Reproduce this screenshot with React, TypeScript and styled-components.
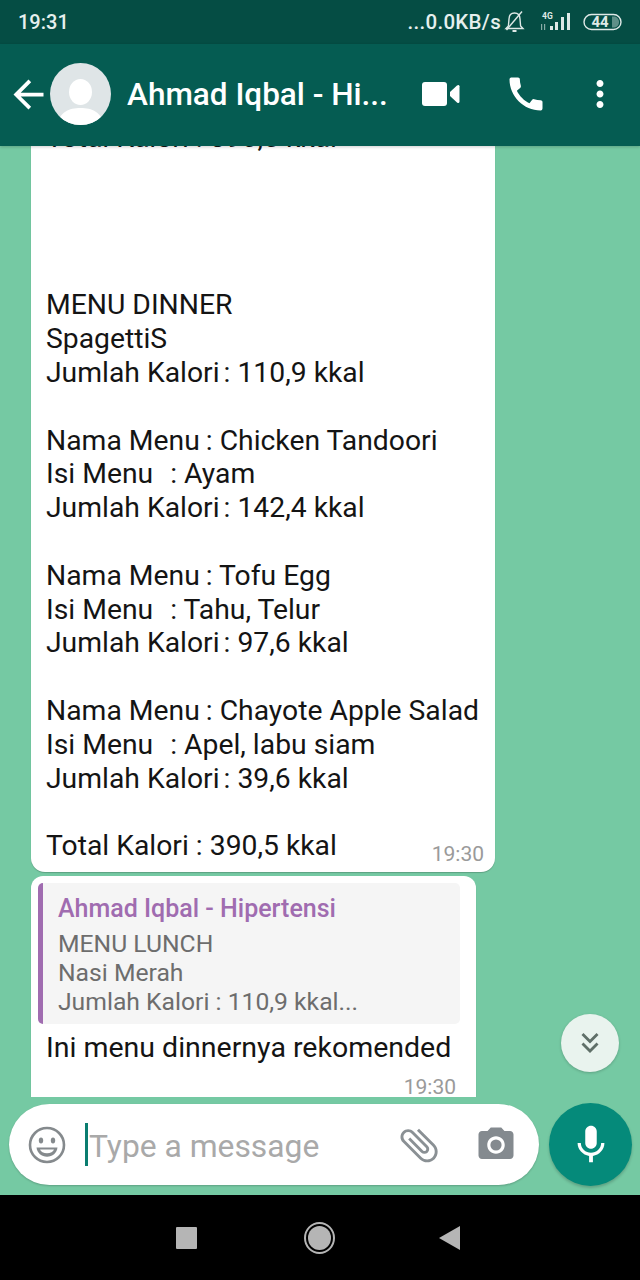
import React from "react";
import styled, { createGlobalStyle } from "styled-components";
import {
  MdArrowBack,
  MdCall,
  MdMoreVert,
  MdMic,
  MdPhotoCamera,
  MdAttachFile,
  MdKeyboardDoubleArrowDown,
} from "react-icons/md";

const GlobalStyle = createGlobalStyle`
  html, body {
    margin: 0;
    padding: 0;
    background: #000;
  }
  body {
    font-family: Roboto, "Liberation Sans", sans-serif;
  }
`;

const Screen = styled.div`
  width: 640px;
  height: 1280px;
  display: flex;
  flex-direction: column;
  overflow: hidden;
`;

const StatusBar = styled.div`
  height: 44px;
  flex: none;
  background: #054d44;
  color: #e6f0ee;
  display: flex;
  align-items: center;
  justify-content: space-between;
  padding: 0 17px 0 18px;
  font-size: 20px;
  font-weight: 500;
`;

const StatusRight = styled.div`
  display: flex;
  align-items: center;
`;

const Speed = styled.span`
  font-size: 20.5px;
  letter-spacing: 0.3px;
`;

const Header = styled.header`
  height: 100px;
  flex: none;
  background: #055c52;
  color: #fff;
  display: flex;
  align-items: center;
  padding: 0 0 2px 6px;
  box-shadow: 0 1px 3px rgba(0, 0, 0, 0.2);
  position: relative;
  z-index: 2;
`;

const Avatar = styled.div`
  width: 61px;
  height: 62px;
  margin-left: -1px;
  flex: none;
`;

const Title = styled.div`
  width: 262px;
  margin-left: 16px;
  font-size: 31.5px;
  font-weight: 500;
  white-space: nowrap;
`;

const HeaderIcons = styled.div`
  display: flex;
  align-items: center;
  color: #fff;
  margin-left: 33px;
`;

const CallIcon = styled(MdCall)`
  margin-left: 44px;
`;

const MoreIcon = styled(MdMoreVert)`
  margin-left: 31px;
`;

const Main = styled.main`
  flex: 1;
  min-height: 0;
  background: #75c9a3;
  display: flex;
  flex-direction: column;
  position: relative;
`;

const Messages = styled.div`
  flex: 1;
  min-height: 0;
  overflow: hidden;
  display: flex;
  flex-direction: column;
  justify-content: flex-end;
  align-items: flex-start;
  gap: 4px;
  padding-left: 31px;
`;

const Bubble = styled.div<{ $width: number; $cut?: boolean }>`
  flex: none;
  position: relative;
  width: ${(p) => p.$width}px;
  box-sizing: border-box;
  background: #fff;
  color: #141414;
  border-radius: ${(p) => (p.$cut ? "12px 12px 0 0" : "0 0 14px 14px")};
  box-shadow: 0 1px 1px rgba(0, 0, 0, 0.2);
`;

const BodyText = styled.div`
  padding: 0 0 9px 15px;
  font-size: 28.3px;
  line-height: 33.8px;
  white-space: pre;
`;

const Line = styled.div`
  height: 33.8px;
`;

const ClippedLine = styled(Line)`
  margin-bottom: -2px;
`;

const Label = styled.span<{ $shift?: number }>`
  margin-right: ${(p) => p.$shift ?? 0}px;
`;

const Time = styled.div`
  position: absolute;
  right: 11px;
  bottom: 5px;
  font-size: 21px;
  line-height: 26px;
  color: #9a9a9a;
`;

const Quote = styled.div`
  margin: 7px 16px 0 7px;
  height: 141px;
  box-sizing: border-box;
  background: #f5f5f5;
  border-left: 5px solid #a06cb0;
  border-radius: 5px;
  padding: 11px 0 0 15px;
`;

const QuoteName = styled.div`
  font-size: 25px;
  line-height: 30px;
  font-weight: 500;
  color: #a06cb0;
  margin-bottom: 5px;
`;

const QuoteLine = styled.div`
  font-size: 24.7px;
  line-height: 29px;
  color: #6d6d6d;
`;

const ReplyText = styled.div`
  padding: 7px 0 0 15px;
  font-size: 28.5px;
  line-height: 34px;
  white-space: nowrap;
`;

const ReplyTime = styled.div`
  padding: 11px 20px 0 0;
  font-size: 21px;
  line-height: 22px;
  text-align: right;
  color: #9a9a9a;
  height: 32px;
  box-sizing: border-box;
`;

const ScrollButton = styled.div`
  position: absolute;
  left: 561px;
  top: 868px;
  width: 58px;
  height: 58px;
  border-radius: 50%;
  background: #e9f3ee;
  color: #5f6f68;
  display: flex;
  align-items: center;
  justify-content: center;
  box-shadow: 0 1px 3px rgba(0, 0, 0, 0.2);
`;

const Composer = styled.div`
  flex: none;
  display: flex;
  align-items: center;
  padding: 6px 8px 9px 9px;
  gap: 10px;
`;

const InputPill = styled.div`
  width: 530px;
  height: 81px;
  background: #fff;
  border-radius: 41px;
  display: flex;
  align-items: center;
  padding-left: 19px;
  box-sizing: border-box;
  box-shadow: 0 1px 2px rgba(0, 0, 0, 0.2);
`;

const Caret = styled.div`
  width: 3px;
  height: 43px;
  margin-left: 19px;
  background: #0a7d70;
  flex: none;
`;

const Placeholder = styled.div`
  width: 307px;
  flex: none;
  font-size: 31.8px;
  color: #a9a9a9;
  white-space: nowrap;
  padding-top: 3px;
  margin-left: 1px;
`;

const ClipIcon = styled(MdAttachFile)`
  transform: rotate(-45deg);
  flex: none;
  color: #8a9094;
`;

const CameraIcon = styled(MdPhotoCamera)`
  flex: none;
  color: #848a8f;
  margin-left: 33px;
`;

const MicButton = styled.div`
  width: 83px;
  height: 83px;
  flex: none;
  border-radius: 50%;
  background: #058a7a;
  color: #fff;
  display: flex;
  align-items: center;
  justify-content: center;
  box-shadow: 0 2px 3px rgba(0, 0, 0, 0.2);
`;

const NavBar = styled.nav`
  height: 85px;
  flex: none;
  background: #000;
  display: flex;
  align-items: center;
`;

const NavSquare = styled.div`
  width: 21px;
  height: 22px;
  margin: 0 0 0 176px;
  background: #b5b5b5;
  border-radius: 1px;
`;

const NavHome = styled.div`
  width: 31px;
  height: 32px;
  margin-left: 107px;
  box-sizing: border-box;
  border-radius: 50%;
  border: 2px solid #b5b5b5;
  padding: 2px;
  &::before {
    content: "";
    display: block;
    width: 100%;
    height: 100%;
    border-radius: 50%;
    background: #b5b5b5;
  }
`;

const NavBack = styled.svg`
  margin-left: 104px;
  width: 21px;
  height: 24px;
`;

const VideoIcon = () => (
  <svg width="38" height="24" viewBox="0 0 38 24" fill="#fff">
    <rect width="25" height="24" rx="3" />
    <path d="M28 10l7-6.500q2-1.500 2.500.8v15.400q-.5 2.300-2.500.8L28 14z" />
  </svg>
);

const Smiley = () => (
  <svg width="38" height="38" viewBox="0 0 38 38" fill="none" style={{ flex: "none" }}>
    <circle cx="19" cy="19" r="17" stroke="#858a8d" strokeWidth="2.6" />
    <ellipse cx="13" cy="14.5" rx="2.2" ry="3" fill="#858a8d" />
    <ellipse cx="25" cy="14.5" rx="2.2" ry="3" fill="#858a8d" />
    <path d="M8.5 21.5h21c-.6 5.6-5 9.2-10.5 9.2S9.1 27.1 8.5 21.5z" fill="#858a8d" />
    <path d="M12 23.5h14c-.8 2.4-3.6 3.7-7 3.700s-6.200-1.300-7-3.700z" fill="#fff" />
  </svg>
);

const BellOff = () => (
  <svg width="21" height="24" viewBox="0 0 21 24" fill="none" stroke="#dfe9e7" strokeWidth="1.4" style={{ marginLeft: 3 }}>
    <path d="M10.5 3c3.6 0 5.4 2.7 5.5 6l.6 7 2.4 2.5H2l2.4-2.5.6-7c.1-3.3 1.9-6 5.5-6z" />
    <path d="M8.5 21h4" strokeWidth="2" />
    <path d="M2.5 20L18 1.5" />
  </svg>
);

const Signal = () => (
  <svg width="34" height="24" viewBox="0 0 34 24" style={{ marginLeft: 15 }} fill="#dfe9e7">
    <text x="2" y="8.5" fontSize="8.5" fontWeight="700" fontFamily="Roboto, sans-serif">4G</text>
    <rect x="1" y="14" width="1.2" height="6" opacity="0.6" />
    <rect x="4" y="14" width="1.2" height="6" opacity="0.6" />
    <rect x="10" y="16" width="3" height="4" />
    <rect x="15" y="12" width="3" height="8" />
    <rect x="21" y="7" width="3" height="13" />
    <rect x="27" y="3" width="3" height="17" />
  </svg>
);

const Battery = () => (
  <svg width="40" height="20" viewBox="0 0 40 20" style={{ marginLeft: 9 }}>
    <rect x="1" y="2.5" width="37" height="15" rx="7.5" fill="none" stroke="#dfe9e7" strokeWidth="1.4" />
    <path d="M29 4.5h2c3 0 5 2.5 5 5.500s-2 5.500-5 5.500h-2z" fill="#5f8f88" />
    <text x="17" y="15" fontSize="15" fontWeight="700" textAnchor="middle" fill="#dfe9e7" fontFamily="Roboto, sans-serif">44</text>
  </svg>
);

const AvatarArt = () => (
  <svg width="61" height="62" viewBox="0 0 61 62">
    <defs>
      <clipPath id="avatar-clip">
        <ellipse cx="30.5" cy="31" rx="30.5" ry="31" />
      </clipPath>
    </defs>
    <g clipPath="url(#avatar-clip)">
      <rect width="61" height="62" fill="#dfe5e7" />
      <ellipse cx="30.5" cy="29" rx="11.5" ry="13" fill="#fff" />
      <path d="M8 62c1-13 11-17 22.500-17S52 49 53 62z" fill="#fff" />
    </g>
  </svg>
);

// label, value, nudge of the text after the label (the source app lines these up unevenly)
const lines: [string, string, number][] = [
  ["MENU DINNER", "", 0],
  ["SpagettiS", "", 0],
  ["Jumlah Kalori", " : 110,9 kkal", -3],
  ["", "", 0],
  ["Nama Menu", " : Chicken Tandoori", -1],
  ["Isi Menu ", " : Ayam", 3],
  ["Jumlah Kalori", " : 142,4 kkal", -3],
  ["", "", 0],
  ["Nama Menu", " : Tofu Egg", -1],
  ["Isi Menu ", " : Tahu, Telur", 3],
  ["Jumlah Kalori", " : 97,6 kkal", -3],
  ["", "", 0],
  ["Nama Menu", " : Chayote Apple Salad", -1],
  ["Isi Menu ", " : Apel, labu siam", 3],
  ["Jumlah Kalori", " : 39,6 kkal", -3],
  ["", "", 0],
  ["Total Kalori", " : 390,5 kkal", 0],
];

const App = () => {
  return (
    <Screen>
      <GlobalStyle />
      <StatusBar>
        <span>19:31</span>
        <StatusRight>
          <Speed>...0.0KB/s</Speed>
          <BellOff />
          <Signal />
          <Battery />
        </StatusRight>
      </StatusBar>
      <Header>
        <MdArrowBack size={45} />
        <Avatar>
          <AvatarArt />
        </Avatar>
        <Title>Ahmad Iqbal - Hi...</Title>
        <HeaderIcons>
          <VideoIcon />
          <CallIcon size={44} />
          <MoreIcon size={42} />
        </HeaderIcons>
      </Header>
      <Main>
        <Messages>
          <Bubble $width={464}>
            <BodyText>
              <ClippedLine>Total Kalori : 390,5 kkal</ClippedLine>
              <Line />
              <Line />
              <Line />
              <Line />
              {lines.map(([label, value, shift], i) => (
                <Line key={i}>
                  <Label $shift={shift}>{label}</Label>
                  {value}
                </Line>
              ))}
            </BodyText>
            <Time>19:30</Time>
          </Bubble>
          <Bubble $width={445} $cut>
            <Quote>
              <QuoteName>Ahmad Iqbal - Hipertensi</QuoteName>
              <QuoteLine>MENU LUNCH</QuoteLine>
              <QuoteLine>Nasi Merah</QuoteLine>
              <QuoteLine>Jumlah Kalori : 110,9 kkal...</QuoteLine>
            </Quote>
            <ReplyText>Ini menu dinnernya rekomended</ReplyText>
            <ReplyTime>19:30</ReplyTime>
          </Bubble>
        </Messages>
        <ScrollButton>
          <MdKeyboardDoubleArrowDown size={34} />
        </ScrollButton>
        <Composer>
          <InputPill>
            <Smiley />
            <Caret />
            <Placeholder>Type a message</Placeholder>
            <ClipIcon size={46} />
            <CameraIcon size={42} />
          </InputPill>
          <MicButton>
            <MdMic size={46} />
          </MicButton>
        </Composer>
      </Main>
      <NavBar>
        <NavSquare />
        <NavHome />
        <NavBack viewBox="0 0 21 24">
          <path d="M21 0v24L0 12z" fill="#b5b5b5" />
        </NavBack>
      </NavBar>
    </Screen>
  );
};

export default App;
